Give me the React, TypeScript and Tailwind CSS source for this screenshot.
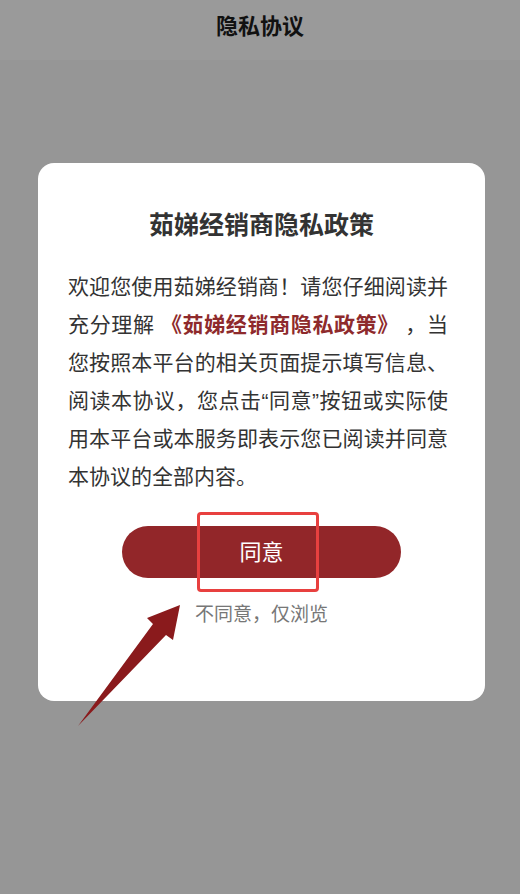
const cn = { fontFamily: '"Liberation Sans", "Noto Sans CJK SC", sans-serif' };

export default function App() {
  return (
    <div className="relative min-h-[894px] w-[520px] bg-[#969696] overflow-hidden" style={cn}>
      {/* Header */}
      <div className="h-[60px] bg-[#9a9a9a] flex items-center justify-center">
        <h1 className="text-[22px] font-bold text-[#111] leading-none -mt-[6px]">隐私协议</h1>
      </div>

      {/* Modal */}
      <div className="ml-[38px] mt-[103px] w-[447px] bg-white rounded-[16px] pt-[46px] pb-[73px]">
        <h2 className="text-center text-[25px] leading-[33px] font-bold text-[#333]">茹娣经销商隐私政策</h2>
        <div className="mt-[26px] pl-[30px] pr-[37px] text-[21px] leading-[38px] text-[#333]">
          <div className="text-justify [text-align-last:justify]">欢迎您使用茹娣经销商！请您仔细阅读并</div>
          <div className="text-justify [text-align-last:justify]">
            充分理解 <span className="font-bold text-[#8e2a2c]">《茹娣经销商隐私政策》</span> ，当
          </div>
          <div className="text-justify [text-align-last:justify]">您按照本平台的相关页面提示填写信息、</div>
          <div className="text-justify [text-align-last:justify]">阅读本协议，您点击“同意”按钮或实际使</div>
          <div className="text-justify [text-align-last:justify]">用本平台或本服务即表示您已阅读并同意</div>
          <div>本协议的全部内容。</div>
        </div>
        <button className="mt-[30px] mx-auto block w-[279px] h-[52px] rounded-full bg-[#922629] text-white text-[22px]">
          同意
        </button>
        <p className="mt-[24px] text-center text-[19px] leading-[26px] text-[#777]">不同意，仅浏览</p>
      </div>

      {/* Annotation overlays */}
      <div className="absolute left-[197px] top-[512px] w-[122px] h-[80px] border-[3px] border-[#e8403f] rounded-[4px]" />
      <svg className="absolute left-0 top-0" width="520" height="894" viewBox="0 0 520 894">
        <polygon
          points="180,605 147,618 153,624 78,726 166,635 173,640"
          fill="#8a1a1c"
        />
      </svg>
    </div>
  );
}
